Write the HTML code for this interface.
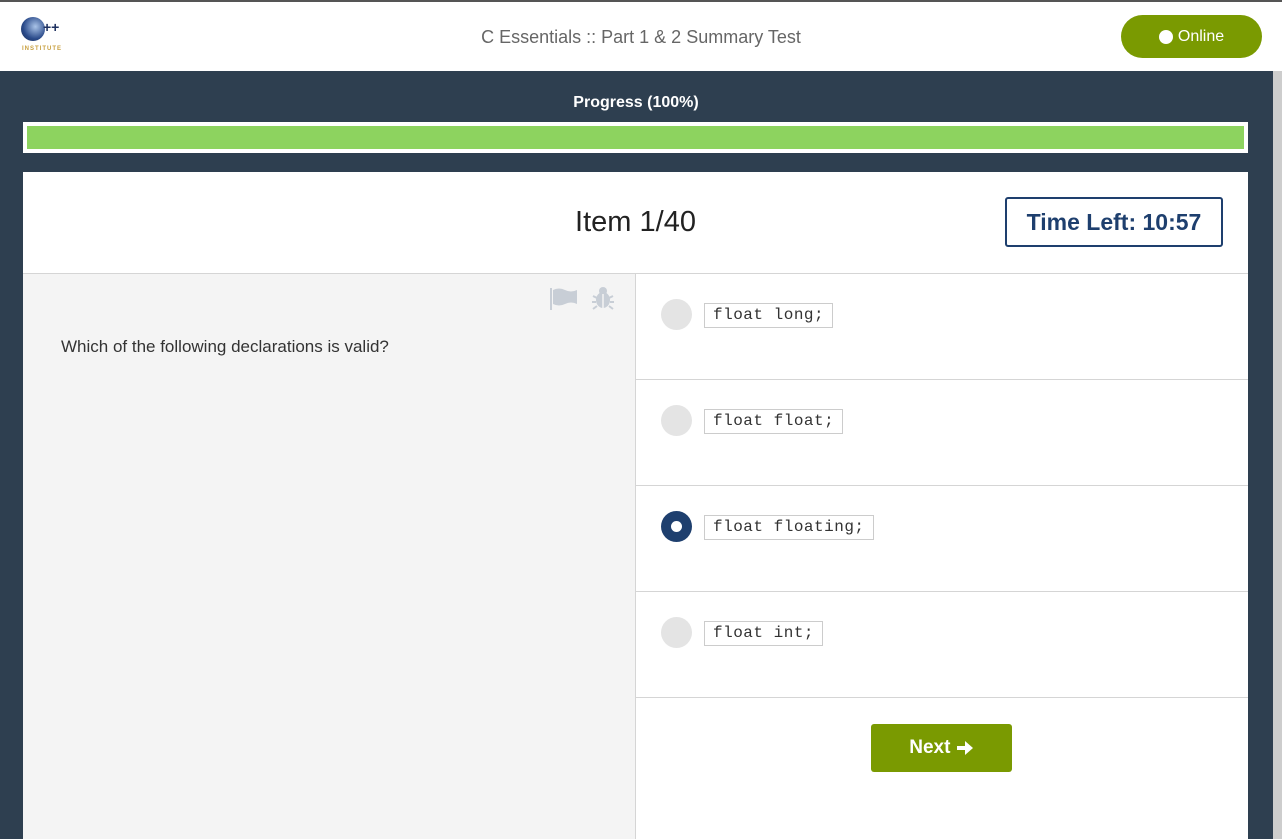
<!DOCTYPE html>
<html><head><meta charset="utf-8"><style>
*{box-sizing:border-box;margin:0;padding:0}
body{width:1282px;height:839px;overflow:hidden;background:#2e3f50;font-family:"Liberation Sans",sans-serif;position:relative}
.top{position:absolute;left:0;top:0;width:1282px;height:71px;background:#fff;border-top:2px solid #555}
.title{position:absolute;left:0;width:1282px;top:25px;text-align:center;color:#666;font-size:18px}
.online{position:absolute;left:1121px;top:13px;width:141px;height:43px;background:#7a9a01;border-radius:22px;color:#fff;font-size:16px;display:flex;align-items:center;justify-content:center}
.online i{display:inline-block;width:14px;height:14px;border-radius:50%;background:#fff;margin-right:5px}
.scroll{position:absolute;left:1273px;top:71px;width:9px;height:768px;background:#cdcdcd}
.prog{position:absolute;left:0;width:1272px;top:94px;text-align:center;color:#fff;font-weight:bold;font-size:16px}
.bar{position:absolute;left:23px;top:122px;width:1225px;height:31px;background:#fff;padding:4px}
.bar div{width:100%;height:100%;background:#8dd35f}
.card{position:absolute;left:23px;top:172px;width:1225px;height:667px;background:#fff}
.item{position:absolute;left:0;width:1225px;top:34px;text-align:center;font-size:29px;color:#222}
.time{position:absolute;left:982px;top:25px;width:218px;height:50px;border:2px solid #1e3f6e;border-radius:3px;color:#1e3f6e;font-weight:bold;font-size:23px;display:flex;align-items:center;justify-content:center}
.left{position:absolute;left:0;top:101px;width:613px;height:566px;background:#f4f4f4;border-top:1px solid #d5d5d5;border-right:1px solid #d5d5d5}
.q{position:absolute;left:38px;top:63px;font-size:17px;color:#333}
.right{position:absolute;left:613px;top:101px;width:612px;border-top:1px solid #d5d5d5}
.opt{height:106px;border-bottom:1px solid #d5d5d5;position:relative}
.rad{position:absolute;left:25px;top:25px;width:31px;height:31px;border-radius:50%;background:#e4e4e4}
.rad.sel{background:#1e3f6e}
.rad.sel:after{content:"";position:absolute;left:10px;top:10px;width:11px;height:11px;border-radius:50%;background:#fff}
.code{position:absolute;left:68px;top:29px;height:25px;border:1px solid #ccc;padding:0 8px;font-family:"Liberation Mono",monospace;font-size:16px;letter-spacing:0.5px;line-height:23px;color:#333}
.next{position:absolute;left:235px;top:450px;width:141px;height:48px;background:#7a9a01;border-radius:3px;color:#fff;font-weight:bold;font-size:19px;display:flex;align-items:center;justify-content:center}
</style></head><body>
<div class="top">
 <div style="position:absolute;left:21px;top:15px;width:24px;height:24px;border-radius:50%;background:radial-gradient(circle at 60% 40%,#aac4e8,#2a4a8a 60%,#1a2a50)"></div>
 <div style="position:absolute;left:43px;top:17px;color:#1e3160;font-weight:bold;font-size:14px">++</div>
 <div style="position:absolute;left:22px;top:44px;color:#c8a040;font-weight:bold;font-size:6px;letter-spacing:1px">INSTITUTE</div>
 <div class="title">C Essentials :: Part 1 &amp; 2 Summary Test</div>
 <div class="online"><i></i>Online</div>
</div>
<div class="scroll"></div>
<div class="prog">Progress (100%)</div>
<div class="bar"><div></div></div>
<div class="card">
 <div class="item">Item 1/40</div>
 <div class="time">Time Left: 10:57</div>
 <div class="left">
  <svg style="position:absolute;left:526px;top:12px" width="70" height="28" viewBox="0 0 70 28">
   <rect x="1" y="2" width="2" height="22" fill="#c8ced6"/>
   <path d="M4 4 Q10 1 16 4 T28 4 V18 Q22 15 16 18 T4 18 Z" fill="#c8ced6"/>
   <ellipse cx="54" cy="14" rx="7" ry="8" fill="#c8ced6"/>
   <circle cx="54" cy="5" r="4" fill="#c8ced6"/>
   <path d="M44 10 L48 12 M64 10 L60 12 M43 16 H47 M65 16 H61 M44 23 L48 20 M64 23 L60 20" stroke="#c8ced6" stroke-width="2"/>
   <line x1="54" y1="8" x2="54" y2="22" stroke="#f4f4f4" stroke-width="1.5"/>
  </svg>
  <div class="q">Which of the following declarations is valid?</div>
 </div>
 <div class="right">
  <div class="opt"><div class="rad"></div><div class="code">float long;</div></div>
  <div class="opt"><div class="rad"></div><div class="code">float float;</div></div>
  <div class="opt"><div class="rad sel"></div><div class="code">float floating;</div></div>
  <div class="opt"><div class="rad"></div><div class="code">float int;</div></div>
  <div class="next">Next&nbsp;<svg width="18" height="16" viewBox="0 0 18 16"><path d="M1 6 H9 V1 L17 8 L9 15 V10 H1 Z" fill="#fff"/></svg></div>
 </div>
</div>
</body></html>
